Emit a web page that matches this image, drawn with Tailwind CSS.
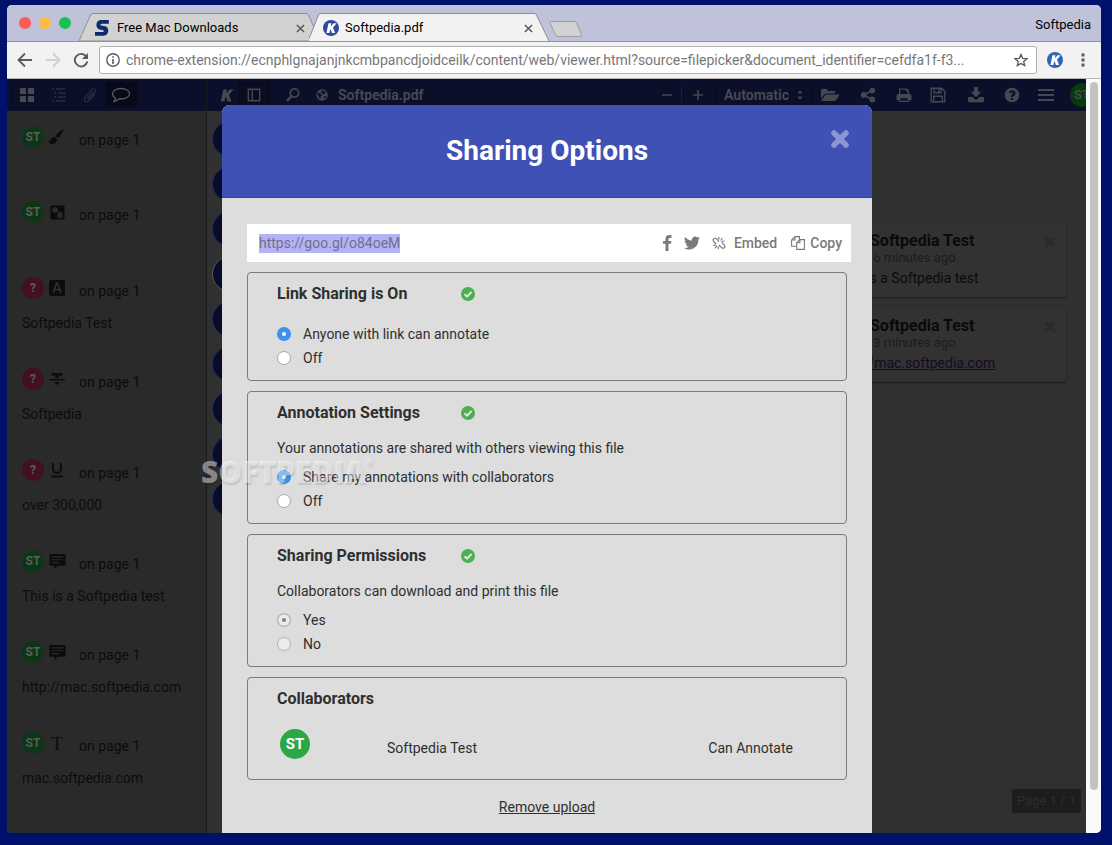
<!DOCTYPE html>
<html lang="en">
<head>
    <meta charset="UTF-8">
    <meta name="viewport" content="width=device-width, initial-scale=1.0">
    <title>Softpedia.pdf</title>
    <script src="https://cdn.jsdelivr.net/npm/@tailwindcss/browser@4"></script>
</head>
<body class="h-screen overflow-hidden bg-[#00116b] pt-[5px] pr-[11px] pb-3 pl-[7px] font-['Roboto',sans-serif] text-sm">

    <!-- Icon sprite -->
    <svg class="hidden">
        <symbol id="i-k" viewBox="0 0 16 16"><path fill="currentColor" d="M4.6 1.5h4L7.7 6l3.7-4.5h4.2L10.700 7.300l2.700 7.200H9.200L7.600 9.700l-1 1.200-.7 3.600h-4z"/></symbol>
        <symbol id="i-grid" viewBox="0 0 16 16"><path fill="currentColor" d="M1.500 1h5a.5.5 0 0 1 .5.5v5a.5.5 0 0 1-.5.500h-5a.5.5 0 0 1-.5-.5v-5a.5.5 0 0 1 .5-.5zm8 0h5a.5.5 0 0 1 .5.5v5a.5.5 0 0 1-.5.500h-5a.5.5 0 0 1-.5-.5v-5a.5.5 0 0 1 .5-.5zm-8 8h5a.5.5 0 0 1 .5.5v5a.5.5 0 0 1-.5.500h-5a.5.5 0 0 1-.5-.5v-5a.5.5 0 0 1 .5-.5zm8 0h5a.5.5 0 0 1 .5.5v5a.5.5 0 0 1-.5.500h-5a.5.5 0 0 1-.5-.5v-5a.5.5 0 0 1 .5-.5z"/></symbol>
        <symbol id="i-list" viewBox="0 0 16 16"><path fill="none" stroke="currentColor" stroke-width="1.400" d="M1 2h2M5 2h9M3 6h2M7 6h8M3 10h2M7 10h8M1 14h2M5 14h9"/></symbol>
        <symbol id="i-clip" viewBox="0 0 16 16"><path fill="none" stroke="currentColor" stroke-width="1.200" stroke-linecap="round" d="M10.500 5 5.800 10.500c-.8 1 .6 2.200 1.500 1.200l5.300-6.200c2-2.500-1.300-5-3.200-2.800L3.200 9.800c-2.700 3.300 1.600 6.500 4.200 3.500L12.500 7.500"/></symbol>
        <symbol id="i-comment" viewBox="0 0 20 16"><path fill="none" stroke="currentColor" stroke-width="1.300" stroke-linejoin="round" d="M10 1.500c4.800 0 8.500 2.300 8.500 5.300S14.800 12 10 12c-.8 0-1.500 0-2.200-.2C6.300 13.400 4.500 14.300 2.800 14.500c.9-.9 1.600-2 1.700-3.500-1.900-1-3-2.500-3-4.200 0-3 3.700-5.300 8.500-5.300z"/></symbol>
        <symbol id="i-panel" viewBox="0 0 16 16"><path fill="none" stroke="currentColor" stroke-width="1.600" d="M1.500 1.500h13v13h-13zM6 1.500v13"/></symbol>
        <symbol id="i-search" viewBox="0 0 16 16"><g fill="none" stroke="currentColor"><circle cx="9.500" cy="6" r="4.200" stroke-width="1.800"/><path stroke-width="2.600" stroke-linecap="round" d="M6 9.800 2.700 13.200"/></g></symbol>
        <symbol id="i-globe" viewBox="0 0 16 16"><path fill="currentColor" fill-rule="evenodd" d="M8 1.500a6.500 6.500 0 1 1 0 13 6.500 6.500 0 0 1 0-13zM3.500 4.500 5 6l1.500.3L8 8.300 6.500 10l-.3 2.500C5 12 4.500 9.500 3.300 8.500 2.800 7 2.900 5.600 3.500 4.500zM8 2.800l3 .9 1.500 2-1.500.8-1.500 1L8.300 6 7 4.800zM10.500 9l2.300.5-1 2-2 1.300z"/></symbol>
        <symbol id="i-folder" viewBox="0 0 20 16"><path fill="currentColor" d="M1 12V3.200C1 2.500 1.500 2 2.200 2h4c.7 0 1.200.5 1.200 1.200V4h6.400c.7 0 1.200.5 1.200 1.200V6.500H6.500c-1 0-1.900.6-2.500 1.300zM1.200 14l3.600-5.500c.4-.6 1.100-1 1.800-1h12c.7 0 .9.5.6 1l-3 4.500c-.4.6-1.100 1-1.800 1z"/></symbol>
        <symbol id="i-share" viewBox="0 0 16 16"><g fill="currentColor"><circle cx="3.700" cy="8" r="2.900"/><circle cx="12.300" cy="3.600" r="2.900"/><circle cx="12.300" cy="12.400" r="2.900"/></g><path fill="none" stroke="currentColor" stroke-width="1.700" d="M12.300 3.600 3.700 8l8.600 4.400"/></symbol>
        <symbol id="i-print" viewBox="0 0 16 16"><path fill="currentColor" fill-rule="evenodd" d="M3 7V1.500h8L13 3.500V7a2.300 2.300 0 0 1 2.500 2.300V13H13v2H3v-2H.5V9.300A2.300 2.300 0 0 1 3 7zm1.300 0h7.400V4.500H10V2.700H4.300zm0 4.300v2.500h7.400v-2.500z"/></symbol>
        <symbol id="i-save" viewBox="0 0 16 16"><path fill="none" stroke="currentColor" stroke-width="1.400" d="M1.200 1.200h10.600l3 3v10.600H1.200zM4 1.200v4.600h7V1.200M3.700 14.800V9.200h8.600v5.600M8.800 2v3"/></symbol>
        <symbol id="i-download" viewBox="0 0 18 16"><path fill="currentColor" d="M7 0h4v4.800h3.300L9 10.200 3.700 4.800H7zM1.800 10h3.700L9 13.200 12.500 10h3.700c.5 0 .8.300.8.800v3.700c0 .5-.3.800-.8.800H1.800c-.5 0-.8-.3-.8-.8v-3.700c0-.5.300-.8.800-.8z"/></symbol>
        <symbol id="i-help" viewBox="0 0 16 16"><path fill="currentColor" fill-rule="evenodd" d="M8 .7a7.300 7.300 0 1 1 0 14.600A7.300 7.300 0 0 1 8 .7zM6.900 11v2h2.200v-2zM4.800 5.200l1.500 1.100C6.800 5.600 7.300 5.200 8 5.200c.6 0 1.100.3 1.100.8 0 .6-.5.900-1.100 1.300-.8.500-1.100 1.100-1.100 2.200V10h2.200c0-.8.300-1 .9-1.300.9-.6 1.500-1.400 1.500-2.500C11.500 4.300 9.900 3.200 8.200 3.200 6.700 3.200 5.600 3.900 4.800 5.200z"/></symbol>
        <symbol id="i-bars" viewBox="0 0 16 16"><path stroke="currentColor" stroke-width="2.200" d="M0 3h16M0 8h16M0 13h16"/></symbol>
        <symbol id="i-brush" viewBox="0 0 16 16"><path fill="currentColor" d="M14.300.6c.7-.4 1.600.5 1.200 1.200-1.300 2.400-3.500 5.300-5.600 7.300L7.600 6.900C9.600 4.600 12 2 14.300.6zM6.700 7.700l2.200 2.200c.3 2.700-2 5.100-4.900 5.100-2.200 0-3.400-1.400-3.800-3.200 1.300.6 2.200.3 2.600-1C3.400 8.900 4.800 7.700 6.700 7.700z"/></symbol>
        <symbol id="i-shape" viewBox="0 0 16 16"><path fill="currentColor" fill-rule="evenodd" d="M1.500.5h13a1 1 0 0 1 1 1v13a1 1 0 0 1-1 1h-13a1 1 0 0 1-1-1v-13a1 1 0 0 1 1-1zM5.500 2.200a3.200 3.200 0 1 0 0 6.400 3.200 3.200 0 0 0 0-6.400zM9.300 7.500q0 2-1.800 2.500v3.500h5.800v-6z"/></symbol>
        <symbol id="i-strike" viewBox="0 0 16 16"><path fill="currentColor" d="M2.500 2h11v2.700H10V7H6V4.700H2.500zM.3 8h15.400v1.600H.3zM6 11h4v1.200L8 14l-2-1.800z"/></symbol>
        <symbol id="i-note" viewBox="0 0 18 18"><path fill="currentColor" fill-rule="evenodd" d="M1.500 1h15a1 1 0 0 1 1 1v10.500a1 1 0 0 1-1 1H9l-3.500 3.800v-3.800h-4a1 1 0 0 1-1-1V2a1 1 0 0 1 1-1zM3 3.500v1.300h12V3.500zm0 3v1.300h12V6.500zm0 3v1.300h8V9.500z"/></symbol>
        <symbol id="i-check" viewBox="0 0 14 14"><circle cx="7" cy="7" r="7" fill="#4caf50"/><path fill="none" stroke="#e4e4e4" stroke-width="2" d="m3.500 7.200 2.600 2.500 4.500-4.800"/></symbol>
        <symbol id="i-times" viewBox="0 0 20 20"><path stroke="currentColor" stroke-width="5.500" stroke-linecap="round" d="m4 4 12 12M16 4 4 16"/></symbol>
        <symbol id="i-x" viewBox="0 0 10 10"><path stroke="currentColor" stroke-width="1.600" d="m1 1 8 8M9 1 1 9"/></symbol>
    </svg>

    <div class="flex h-full flex-col overflow-hidden rounded-[5px] bg-[#f2f2f2]">

        <!-- Tab strip -->
        <header class="flex h-9 shrink-0 items-end bg-[#c0c2d9]">
            <div class="flex h-full items-center gap-2 pl-3">
                <span class="size-3 rounded-full bg-[#fc5b57]"></span>
                <span class="size-3 rounded-full bg-[#fdbc40]"></span>
                <span class="size-3 rounded-full bg-[#18c152]"></span>
            </div>
            <div class="relative ml-2 flex h-7 w-[236px] items-center pt-0.5 pr-2.5 pl-4 text-[13px] text-black">
                <svg class="absolute inset-0 size-full" viewBox="0 0 236 28" preserveAspectRatio="none"><path d="M0 28 11.500 2Q12 .5 14 .5H227q2 0 2.500 1.500L241 28z" fill="#d2d2d2" stroke="#8d8d93"/></svg>
                <svg class="relative h-4 w-[14px]" viewBox="0 0 14 16"><path fill="#0d2a6c" d="M13.800 0v3.800H6.500c-1.200 0-1.400 1.400-.3 1.600l4 .8c4.600 1 4 9.600-1.700 9.600H0v-3.900h7.800c1.300 0 1.500-1.400.3-1.700l-3.600-.8C-.3 8.200.7 0 6 0z"/></svg>
                <span class="relative ml-2 flex-1">Free Mac Downloads</span>
                <button aria-label="Close tab" class="relative text-[#555]"><svg class="size-[9px]"><use href="#i-x"/></svg></button>
            </div>
            <div class="relative -ml-1.5 flex h-7 w-[240px] items-center pt-0.5 pr-4 pl-3.5 text-[13px] text-black">
                <svg class="absolute inset-0 size-full" viewBox="0 0 240 28" preserveAspectRatio="none"><path d="M-1 28 9.500 2Q10 .5 12 .5H225q2 0 2.500 1.500L240 28" fill="#f2f2f2" stroke="#8d8d93"/></svg>
                <span class="relative grid size-4 place-items-center rounded-full bg-[#2f4a9e] text-white"><svg class="size-3"><use href="#i-k"/></svg></span>
                <span class="relative ml-1.5 flex-1">Softpedia.pdf</span>
                <button aria-label="Close tab" class="relative text-[#555]"><svg class="size-[9px]"><use href="#i-x"/></svg></button>
            </div>
            <button aria-label="New tab" class="mb-1"><svg class="h-4 w-[34px]" viewBox="0 0 34 16"><path d="M1.500.5H25q2 0 2.500 1.500l5 11.500q.5 2-1.500 2H9q-2 0-2.500-1.500L1 2Q.5.5 1.500.5z" fill="#d2d2d2" stroke="#9c9ca5"/></svg></button>
            <span class="mr-2.5 mb-1.5 ml-auto text-[13px] leading-5 text-black">Softpedia</span>
        </header>

        <!-- Address bar -->
        <div class="flex h-[38px] shrink-0 items-center border-t border-b border-t-[#8f92a4] border-b-[#b3b3b3] pl-2.5 text-[#5a5a5a]">
            <button aria-label="Back"><svg class="size-4" viewBox="0 0 16 16"><path fill="none" stroke="currentColor" stroke-width="1.800" d="M15 8H2M8 1.500 1.500 8 8 14.500"/></svg></button>
            <button aria-label="Forward" disabled class="ml-3 text-[#d0d0d0]"><svg class="size-4" viewBox="0 0 16 16"><path fill="none" stroke="currentColor" stroke-width="1.800" d="M1 8h13M8 1.500 14.500 8 8 14.500"/></svg></button>
            <button aria-label="Reload" class="ml-3"><svg class="size-4" viewBox="0 0 16 16"><path fill="none" stroke="currentColor" stroke-width="1.900" d="M13.300 4.500A6.300 6.300 0 1 0 14.300 9.500"/><path fill="currentColor" d="M15 1v6H9z"/></svg></button>
            <div class="ml-2.5 flex h-7 min-w-0 flex-1 items-center gap-1.5 rounded-[3px] border border-[#b0b0b0] bg-white pr-2 pl-1.5">
                <svg class="size-3.5 shrink-0" viewBox="0 0 14 14"><circle cx="7" cy="7" r="6.200" fill="none" stroke="currentColor" stroke-width="1.400"/><path fill="currentColor" d="M6.200 3.200h1.600v1.600H6.200zm0 2.800h1.600v5H6.200z"/></svg>
                <input aria-label="Address" type="text" readonly value="chrome-extension://ecnphlgnajanjnkcmbpancdjoidceilk/content/web/viewer.html?source=filepicker&amp;document_identifier=cefdfa1f-f3..." class="min-w-0 flex-1 text-[14px] text-[#777] outline-none">
                <svg class="size-3.5 shrink-0" viewBox="0 0 16 16"><path fill="none" stroke="currentColor" stroke-width="1.500" d="m8 1.600 1.900 4.500 4.900.4-3.700 3.200 1.100 4.700L8 11.900l-4.200 2.500 1.100-4.700-3.700-3.200 4.900-.4z"/></svg>
            </div>
            <span class="ml-2.5 grid size-4 place-items-center rounded-full bg-[#2f66b4] text-white"><svg class="size-3"><use href="#i-k"/></svg></span>
            <button aria-label="Menu" class="mr-3 ml-3.5"><svg class="h-4 w-3" viewBox="0 0 12 16"><path fill="currentColor" d="M4.500 1.500h3v3h-3zm0 5h3v3h-3zm0 5h3v3h-3z"/></svg></button>
        </div>

        <div class="flex min-h-0 flex-1">
            <div class="relative flex min-w-0 flex-1 overflow-hidden bg-[#303030]">

                <!-- Annotation list -->
                <aside class="flex w-[200px] shrink-0 flex-col border-r border-[#1b1b1b] bg-[#2a2a2a] text-[#0c0c0c]">
                    <div class="flex h-8 shrink-0 items-center bg-[#0c0f29] pl-1 text-[#3b3c48]">
                        <button aria-label="Thumbnails" class="grid h-[26px] w-8 place-items-center border border-[#090b20] text-[#47474f]"><svg class="size-4"><use href="#i-grid"/></svg></button>
                        <button aria-label="Outline" class="grid h-[26px] w-[31px] place-items-center border-y border-[#090b20] text-[#2b2d3c]"><svg class="size-4"><use href="#i-list"/></svg></button>
                        <button aria-label="Attachments" class="grid h-[26px] w-[31px] place-items-center border-y border-l border-[#090b20] text-[#2b2d3c]"><svg class="size-4"><use href="#i-clip"/></svg></button>
                        <button aria-label="Comments" class="grid h-[26px] w-8 place-items-center bg-[#080a1a] text-[#5a5a62]"><svg class="h-4 w-5"><use href="#i-comment"/></svg></button>
                    </div>
                    <ul class="px-[15px]">
                        <li class="h-[69px] border-b border-[#262626] pt-[15px]">
                            <div class="flex items-center">
                                <span class="grid size-[22px] place-items-center rounded-full bg-[#0c3616] pt-px text-[12px] font-bold text-[#5c5c5c]">ST</span>
                                <svg class="ml-1 size-4"><use href="#i-brush"/></svg>
                                <span class="mt-1.5 ml-[15px] leading-4">on page 1</span>
                            </div>
                        </li>
                        <li class="h-[76px] border-b border-[#262626] pt-[21px]">
                            <div class="flex items-center">
                                <span class="grid size-[22px] place-items-center rounded-full bg-[#0c3616] pt-px text-[12px] font-bold text-[#5c5c5c]">ST</span>
                                <svg class="ml-1.5 size-[15px]"><use href="#i-shape"/></svg>
                                <span class="mt-1.5 ml-3.5 leading-4">on page 1</span>
                            </div>
                        </li>
                        <li class="border-b border-[#262626] pt-[21px] pb-[13px]">
                            <div class="flex items-center">
                                <span class="grid size-[22px] place-items-center rounded-full bg-[#42101f] pt-px text-[12px] font-bold text-[#5c5c5c]">?</span>
                                <span class="ml-[5px] grid size-4 place-items-center rounded-xs bg-[#0c0c0c] text-[15px] leading-none text-[#353535]">A</span>
                                <span class="mt-1.5 ml-3.5 leading-4">on page 1</span>
                            </div>
                            <p class="mt-3.5 leading-5">Softpedia Test</p>
                        </li>
                        <li class="border-b border-[#262626] pt-[21px] pb-[13px]">
                            <div class="flex items-center">
                                <span class="grid size-[22px] place-items-center rounded-full bg-[#42101f] pt-px text-[12px] font-bold text-[#5c5c5c]">?</span>
                                <svg class="ml-[5px] size-4"><use href="#i-strike"/></svg>
                                <span class="mt-1.5 ml-3.5 leading-4">on page 1</span>
                            </div>
                            <p class="mt-3.5 leading-5">Softpedia</p>
                        </li>
                        <li class="border-b border-[#262626] pt-[21px] pb-[13px]">
                            <div class="flex items-center">
                                <span class="grid size-[22px] place-items-center rounded-full bg-[#42101f] pt-px text-[12px] font-bold text-[#5c5c5c]">?</span>
                                <svg class="ml-[5px] size-4" viewBox="0 0 16 16"><path fill="none" stroke="currentColor" stroke-width="1.800" d="M4 1v6c0 5 8 5 8 0V1M2 14.500h12"/></svg>
                                <span class="mt-1.5 ml-3.5 leading-4">on page 1</span>
                            </div>
                            <p class="mt-3.5 leading-5">over 300,000</p>
                        </li>
                        <li class="border-b border-[#262626] pt-[21px] pb-[13px]">
                            <div class="flex items-center">
                                <span class="grid size-[22px] place-items-center rounded-full bg-[#0c3616] pt-px text-[12px] font-bold text-[#5c5c5c]">ST</span>
                                <svg class="ml-[5px] size-[17px]"><use href="#i-note"/></svg>
                                <span class="mt-1.5 ml-[13px] leading-4">on page 1</span>
                            </div>
                            <p class="mt-3.5 leading-5">This is a Softpedia test</p>
                        </li>
                        <li class="border-b border-[#262626] pt-[21px] pb-[13px]">
                            <div class="flex items-center">
                                <span class="grid size-[22px] place-items-center rounded-full bg-[#0c3616] pt-px text-[12px] font-bold text-[#5c5c5c]">ST</span>
                                <svg class="ml-[5px] size-[17px]"><use href="#i-note"/></svg>
                                <span class="mt-1.5 ml-[13px] leading-4">on page 1</span>
                            </div>
                            <p class="mt-3.5 leading-5">http://mac.softpedia.com</p>
                        </li>
                        <li class="pt-[21px]">
                            <div class="flex items-center">
                                <span class="grid size-[22px] place-items-center rounded-full bg-[#0c3616] pt-px text-[12px] font-bold text-[#5c5c5c]">ST</span>
                                <span class="ml-[5px] w-4 text-center font-['Liberation_Serif',serif] text-[19px] leading-none">T</span>
                                <span class="mt-1.5 ml-3.5 leading-4">on page 1</span>
                            </div>
                            <p class="mt-3.5 leading-5">mac.softpedia.com</p>
                        </li>
                    </ul>
                </aside>

                <!-- Document viewer -->
                <main class="flex min-w-0 flex-1 flex-col">
                    <div class="flex h-8 shrink-0 items-center overflow-hidden bg-[#0c0f29] pl-3 text-[#47474f]">
                        <svg class="size-[15px] shrink-0"><use href="#i-k"/></svg>
                        <button aria-label="Toggle sidebar" class="ml-1 grid h-[26px] w-8 place-items-center border border-[#070920] bg-[#0a0c20]"><svg class="size-3.5"><use href="#i-panel"/></svg></button>
                        <button aria-label="Find" class="ml-[15px]"><svg class="size-4"><use href="#i-search"/></svg></button>
                        <svg class="ml-3.5 size-3.5"><use href="#i-globe"/></svg>
                        <span class="ml-[9px] font-bold">Softpedia.pdf</span>
                        <button aria-label="Zoom out" class="ml-auto"><svg class="size-3" viewBox="0 0 12 12"><path stroke="currentColor" stroke-width="1.600" d="M1 6h10"/></svg></button>
                        <span class="ml-2 h-4 w-px bg-[#1b1e38]"></span>
                        <button aria-label="Zoom in" class="ml-2.5"><svg class="size-3" viewBox="0 0 12 12"><path stroke="currentColor" stroke-width="1.600" d="M1 6h10M6 1v10"/></svg></button>
                        <div class="relative ml-3 flex items-center">
                            <select aria-label="Zoom" class="h-[26px] w-24 appearance-none border border-[#090b20] pl-[7px] font-bold">
                                <option>Automatic</option>
                            </select>
                            <svg class="pointer-events-none absolute right-2 h-2.5 w-2" viewBox="0 0 8 10"><path fill="currentColor" d="m4 0 2.500 3.500h-5zM4 10l2.500-3.500h-5z"/></svg>
                        </div>
                        <button aria-label="Open file" class="ml-2"><svg class="h-4 w-5"><use href="#i-folder"/></svg></button>
                        <button aria-label="Share" class="ml-5"><svg class="size-4"><use href="#i-share"/></svg></button>
                        <button aria-label="Print" class="ml-5"><svg class="size-4"><use href="#i-print"/></svg></button>
                        <button aria-label="Save" class="ml-[18px]"><svg class="size-4"><use href="#i-save"/></svg></button>
                        <button aria-label="Download" class="ml-[21px]"><svg class="h-4 w-[18px]"><use href="#i-download"/></svg></button>
                        <button aria-label="Help" class="ml-[19px]"><svg class="size-4"><use href="#i-help"/></svg></button>
                        <button aria-label="More" class="ml-[18px]"><svg class="size-4"><use href="#i-bars"/></svg></button>
                        <span class="-mr-2 ml-4 grid size-6 shrink-0 place-items-center rounded-full bg-[#073a0c] text-[13px] font-bold">ST</span>
                    </div>

                    <div class="flex min-h-0 flex-1 justify-between">
                        <div class="flex flex-col gap-[9px] pt-2.5 pl-[5px]">
                            <span class="size-9 rounded-full border border-[#1d2a55] bg-[#080c2b]"></span>
                            <span class="size-9 rounded-full border border-[#1d2a55] bg-[#080c2b]"></span>
                            <span class="size-9 rounded-full border border-[#1d2a55] bg-[#080c2b]"></span>
                            <span class="size-9 rounded-full border border-[#5a5a5a] bg-[#080c2b]"></span>
                            <span class="size-9 rounded-full border border-[#1d2a55] bg-[#080c2b]"></span>
                            <span class="size-9 rounded-full border border-[#1d2a55] bg-[#080c2b]"></span>
                            <span class="size-9 rounded-full border border-[#1d2a55] bg-[#080c2b]"></span>
                            <span class="size-9 rounded-full border border-[#1d2a55] bg-[#080c2b]"></span>
                            <span class="size-9 rounded-full border border-[#1d2a55] bg-[#080c2b]"></span>
                        </div>
                        <div class="flex flex-col pr-[5px] pb-5">
                            <div class="mr-[15px] w-[242px] pt-[111px] text-[#0a0a0a]">
                                <article class="flex h-[75px] flex-col rounded-xs bg-[#323232] px-2.5 pt-2.5 shadow-[0_1px_2px_#1c1c1c]">
                                    <div class="flex justify-between pl-9">
                                        <h3 class="text-[16px] leading-[18px] font-bold">Softpedia Test</h3>
                                        <svg class="mt-1 size-3 text-[#2b2b2b]"><use href="#i-times"/></svg>
                                    </div>
                                    <p class="pl-8 text-[13px] leading-4 text-[#1c1c1c]">16 minutes ago</p>
                                    <p class="mt-0.5 pl-0.5 leading-5">This is a Softpedia test</p>
                                </article>
                                <article class="mt-2.5 flex h-[75px] flex-col rounded-xs bg-[#323232] px-2.5 pt-2.5 shadow-[0_1px_2px_#1c1c1c]">
                                    <div class="flex justify-between pl-9">
                                        <h3 class="text-[16px] leading-[18px] font-bold">Softpedia Test</h3>
                                        <svg class="mt-1 size-3 text-[#2b2b2b]"><use href="#i-times"/></svg>
                                    </div>
                                    <p class="pl-8 text-[13px] leading-4 text-[#1c1c1c]">13 minutes ago</p>
                                    <a href="#" class="mt-0.5 pl-0.5 leading-5 text-[#150a24] underline">http://mac.softpedia.com</a>
                                </article>
                            </div>
                            <span class="mt-auto ml-auto rounded-xs bg-[#1d1d1d] px-[5px] py-0.5 text-[13px] leading-5 text-[#2e2e2e]">Page 1 / 1</span>
                        </div>
                    </div>
                </main>

                <!-- Sharing dialog -->
                <div class="absolute inset-0 flex justify-center pt-[26px] pl-px">
                    <section role="dialog" aria-labelledby="dialogTitle" class="flex w-[650px] flex-col overflow-hidden rounded-t-lg bg-[#dddddd] text-[#2f2f2f]">
                        <div class="relative flex h-[93px] shrink-0 items-center justify-center border-b border-[#34449c] bg-[#3f51b5]">
                            <h1 id="dialogTitle" class="text-[28px] font-bold text-white">Sharing Options</h1>
                            <button aria-label="Close" class="absolute top-6 right-[22px] text-[#8c97d2]"><svg class="size-5"><use href="#i-times"/></svg></button>
                        </div>
                        <div class="flex flex-col gap-2.5 px-[25px] pt-[26px]">
                            <div class="-mr-1 flex h-[38px] items-center bg-white pr-[9px] pl-3 font-medium text-[#7a7a7a]">
                                <input aria-label="Share link" type="text" readonly value="https://goo.gl/o84oeM" class="field-sizing-content h-[19px] bg-[#b4b3f6] font-normal text-[#716f8c] outline-none">
                                <a href="#" aria-label="Facebook" class="ml-auto"><svg class="h-4 w-2.5" viewBox="0 0 10 16"><path fill="currentColor" d="M9.500.2v2.700H8c-1.200 0-1.500.6-1.500 1.400V6h2.900L9 8.800H6.500V16h-3V8.800H1V6h2.500V3.800C3.500 1.300 5 0 7.300 0z"/></svg></a>
                                <a href="#" aria-label="Twitter" class="ml-3"><svg class="h-4 w-4" viewBox="0 0 24 24"><path fill="currentColor" d="M24 4.600a10 10 0 0 1-2.800.8 5 5 0 0 0 2.100-2.700 10 10 0 0 1-3.100 1.200 4.900 4.900 0 0 0-8.400 4.500A14 14 0 0 1 1.700 3.100a4.900 4.900 0 0 0 1.500 6.600 5 5 0 0 1-2.200-.6 4.900 4.900 0 0 0 3.900 4.900 5 5 0 0 1-2.200.1 4.900 4.900 0 0 0 4.600 3.400A9.900 9.900 0 0 1 0 19.500 14 14 0 0 0 21.500 7.100 10 10 0 0 0 24 4.600z"/></svg></a>
                                <a href="#" class="ml-3 flex items-center gap-2"><svg class="size-3.5" viewBox="0 0 14 14"><path fill="none" stroke="currentColor" stroke-width="1.200" d="M7 5.500 4.800 3.200C3.700 2 2.500 2 1.700 2.800S1 4.800 2 5.900L4 8M7 9l2.300 2.400c1.200 1.200 2.300 1.100 3.100.3s.7-2-.4-3.100L9.800 6.400M8.500 4.500l2-2.500M6.800 3.500 7 1M9.500 5.500 12.500 5M5 9.800 3.200 12M6.500 10.500 6.300 13M4 9 1.200 9.500"/></svg>Embed</a>
                                <a href="#" class="ml-3.5 flex items-center gap-[5px]"><svg class="size-3.5" viewBox="0 0 14 14"><path fill="none" stroke="currentColor" stroke-width="1.100" d="M5.700 10.300H.6V4L4 .6h4.400v3M4 .6V4H.6M5.700 13.400V6.800L8.900 3.600h4.500v9.800zM8.900 3.600v3.200H5.700"/></svg>Copy</a>
                            </div>

                            <fieldset class="rounded border border-[#7b7b7b] px-[29px] pt-[9px] pb-2.5">
                                <h2 class="flex items-center text-[16px] leading-6 font-bold"><span class="w-[184px]">Link Sharing is On</span><svg class="size-3.5"><use href="#i-check"/></svg></h2>
                                <div class="mt-4 leading-6">
                                    <label class="flex items-center gap-3"><input type="radio" name="link" checked class="size-3.5 appearance-none rounded-full border border-[#a8a8a8] bg-white checked:border-5 checked:border-[#3c93ee]">Anyone with link can annotate</label>
                                    <label class="flex items-center gap-3"><input type="radio" name="link" class="size-3.5 appearance-none rounded-full border border-[#a8a8a8] bg-white checked:border-5 checked:border-[#3c93ee]">Off</label>
                                </div>
                            </fieldset>

                            <fieldset class="rounded border border-[#7b7b7b] px-[29px] pt-[9px] pb-2.5">
                                <h2 class="flex items-center text-[16px] leading-6 font-bold"><span class="w-[184px]">Annotation Settings</span><svg class="size-3.5"><use href="#i-check"/></svg></h2>
                                <p class="mt-[11px] leading-6">Your annotations are shared with others viewing this file</p>
                                <div class="mt-[5px] leading-6">
                                    <label class="flex items-center gap-3"><input type="radio" name="annotations" checked class="size-3.5 appearance-none rounded-full border border-[#a8a8a8] bg-white checked:border-5 checked:border-[#3c93ee]">Share my annotations with collaborators</label>
                                    <label class="flex items-center gap-3"><input type="radio" name="annotations" class="size-3.5 appearance-none rounded-full border border-[#a8a8a8] bg-white checked:border-5 checked:border-[#3c93ee]">Off</label>
                                </div>
                            </fieldset>

                            <fieldset class="rounded border border-[#7b7b7b] px-[29px] pt-[9px] pb-2.5">
                                <h2 class="flex items-center text-[16px] leading-6 font-bold"><span class="w-[184px]">Sharing Permissions</span><svg class="size-3.5"><use href="#i-check"/></svg></h2>
                                <p class="mt-[11px] leading-6">Collaborators can download and print this file</p>
                                <div class="mt-[5px] leading-6">
                                    <label class="flex items-center gap-3"><input type="radio" name="permissions" disabled checked class="size-3.5 appearance-none rounded-full border border-[#b5b5b5] bg-[#808080] ring-4 ring-[#ebebeb] ring-inset">Yes</label>
                                    <label class="flex items-center gap-3"><input type="radio" name="permissions" disabled class="size-3.5 appearance-none rounded-full border border-[#b5b5b5] bg-[#ebebeb]">No</label>
                                </div>
                            </fieldset>

                            <div class="rounded border border-[#7b7b7b] px-[29px] pt-[9px] pb-5">
                                <h2 class="text-[16px] leading-6 font-bold">Collaborators</h2>
                                <div class="mt-[18px] flex items-center pr-6 pl-[3px]">
                                    <span class="grid size-[30px] place-items-center rounded-full bg-[#2ba745] pt-px text-[15px] font-bold text-white">ST</span>
                                    <span class="mt-2 ml-[77px] leading-5">Softpedia Test</span>
                                    <span class="mt-2 ml-auto leading-5">Can Annotate</span>
                                </div>
                            </div>
                            <a href="#" class="mt-[7px] self-center leading-5 underline">Remove upload</a>
                        </div>
                    </section>
                </div>

                <!-- Watermark -->
                <div class="pointer-events-none absolute top-[377px] left-[194px] flex items-start font-['Open_Sans',sans-serif] leading-8 font-extrabold text-white/45 text-shadow-[1px_2px_2px_rgb(0_0_0/0.12)]">
                    <span class="text-[30px]">SOFTPEDIA</span><span class="text-[8px] leading-3">®</span>
                </div>
            </div>

            <!-- Scrollbar -->
            <div class="w-[15px] shrink-0 bg-[#fafafa] px-1 pt-[3px] pb-[43px]">
                <div class="h-full w-2 rounded-full bg-[#c2c2c4]"></div>
            </div>
        </div>
    </div>
</body>
</html>
